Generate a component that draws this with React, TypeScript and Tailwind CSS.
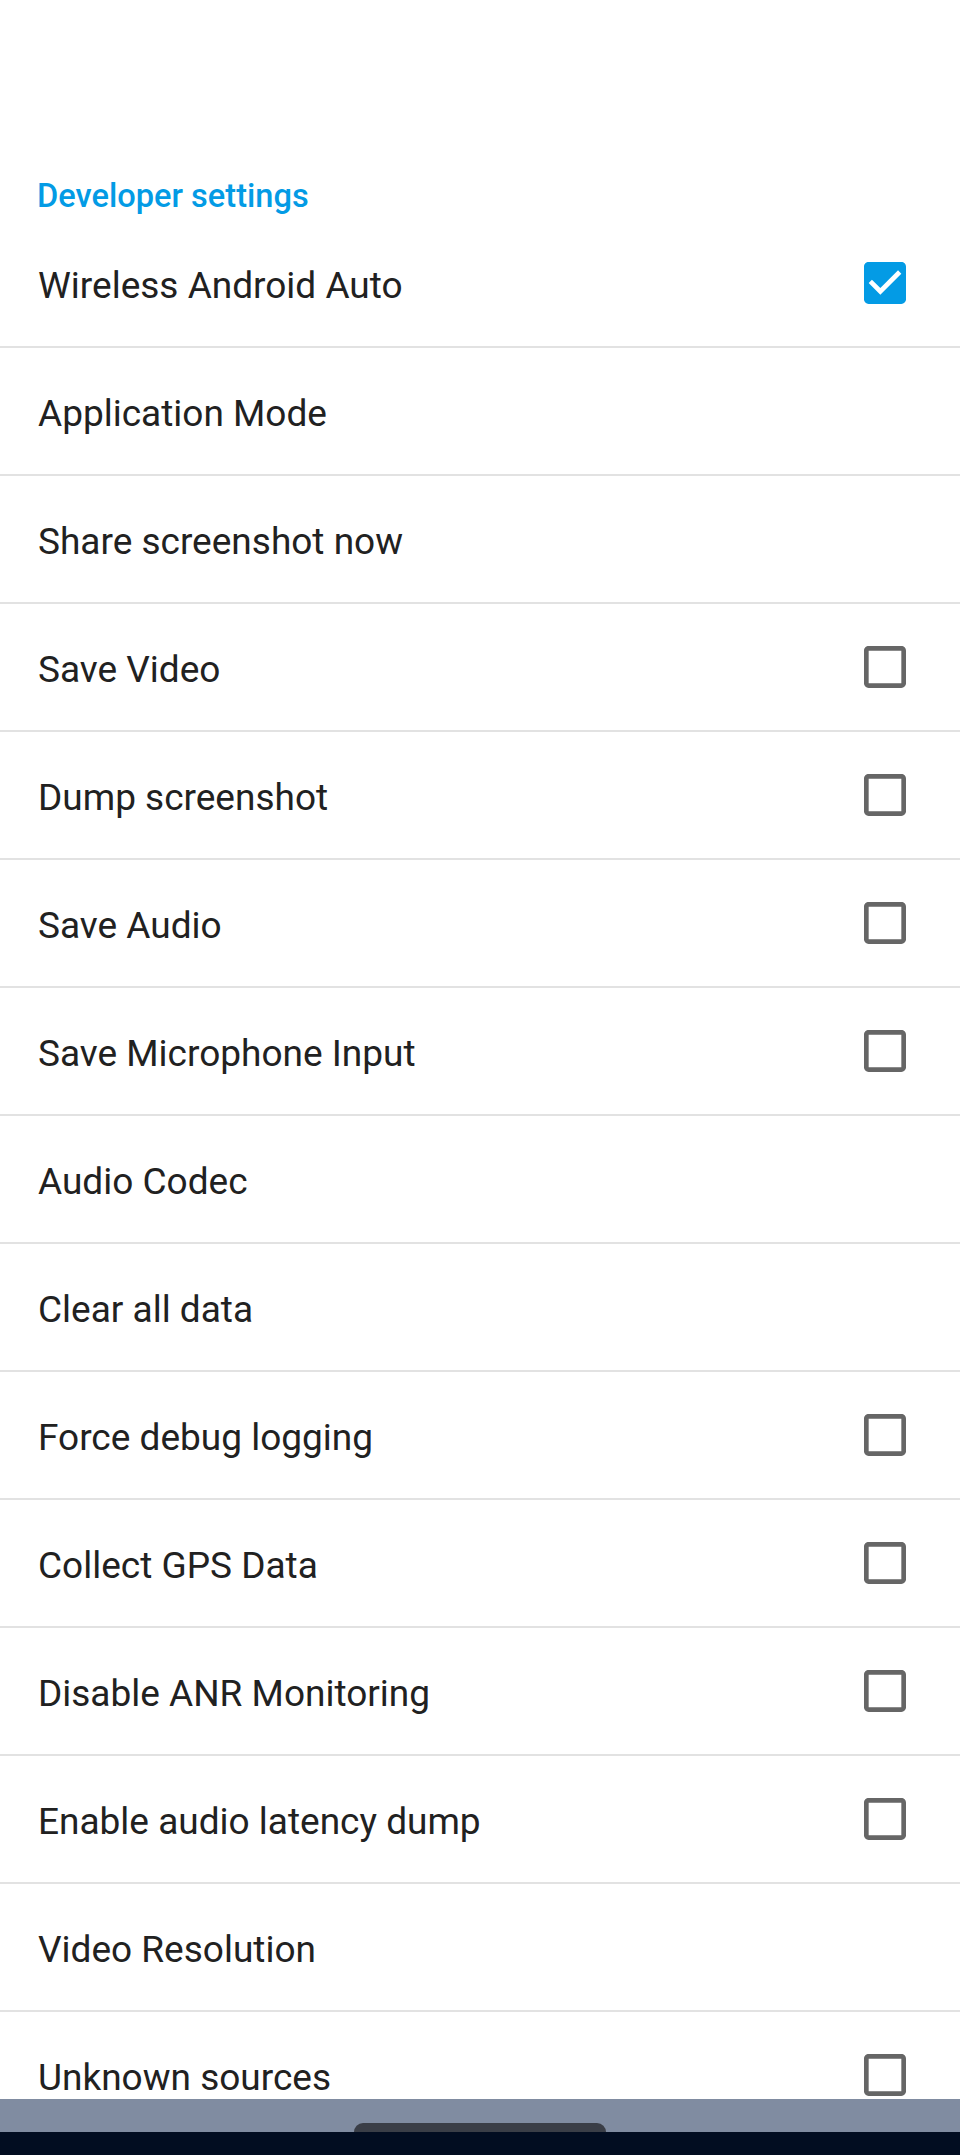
import React from 'react';

type Item = { label: string; checkbox?: boolean; checked?: boolean };

const items: Item[] = [
  { label: 'Wireless Android Auto', checkbox: true, checked: true },
  { label: 'Application Mode' },
  { label: 'Share screenshot now' },
  { label: 'Save Video', checkbox: true },
  { label: 'Dump screenshot', checkbox: true },
  { label: 'Save Audio', checkbox: true },
  { label: 'Save Microphone Input', checkbox: true },
  { label: 'Audio Codec' },
  { label: 'Clear all data' },
  { label: 'Force debug logging', checkbox: true },
  { label: 'Collect GPS Data', checkbox: true },
  { label: 'Disable ANR Monitoring', checkbox: true },
  { label: 'Enable audio latency dump', checkbox: true },
  { label: 'Video Resolution' },
  { label: 'Unknown sources', checkbox: true },
];

function CheckBox({ checked }: { checked?: boolean }) {
  if (checked) {
    return (
      <svg viewBox="0 0 24 24" className="w-[56px] h-[56px]">
        <path
          fill="#039be5"
          d="M19 3H5c-1.11 0-2 .9-2 2v14c0 1.1.89 2 2 2h14c1.11 0 2-.9 2-2V5c0-1.1-.89-2-2-2zm-9 14l-5-5 1.41-1.41L10 14.17l7.59-7.59L19 8l-9 9z"
        />
      </svg>
    );
  }
  return (
    <svg viewBox="0 0 24 24" className="w-[56px] h-[56px]">
      <path
        fill="#666666"
        d="M19 5v14H5V5h14m0-2H5c-1.11 0-2 .9-2 2v14c0 1.1.89 2 2 2h14c1.11 0 2-.9 2-2V5c0-1.1-.89-2-2-2z"
      />
    </svg>
  );
}

function Row({ item }: { item: Item }) {
  return (
    <div className="h-[128px] flex items-center justify-between pl-[38px] pr-[47px] border-b-2 border-[#e2e2e2]">
      <span className="pt-[5px] text-[37px] leading-[44px] text-[#212121]">{item.label}</span>
      {item.checkbox && <CheckBox checked={item.checked} />}
    </div>
  );
}

export default function App() {
  return (
    <div
      className="relative w-[960px] h-[2155px] overflow-hidden bg-white"
      style={{ fontFamily: 'Roboto, "Noto Sans", sans-serif' }}
    >
      <div className="pt-[176px]">
        <div className="pl-[37px] h-[44px] text-[32.6px] leading-[40px] font-medium text-[#039be5]">
          Developer settings
        </div>
        {items.map((it) => (
          <Row key={it.label} item={it} />
        ))}
      </div>

      {/* system navigation bar */}
      <div className="absolute left-0 right-0 bottom-0 flex flex-col">
        <div className="h-[33px] bg-[#808ca1] flex justify-center items-end">
          <div className="w-[252px] h-[9px] rounded-t-full bg-[#3a3e47]" />
        </div>
        <div className="h-[23px] bg-[#020d21]" />
      </div>
    </div>
  );
}
